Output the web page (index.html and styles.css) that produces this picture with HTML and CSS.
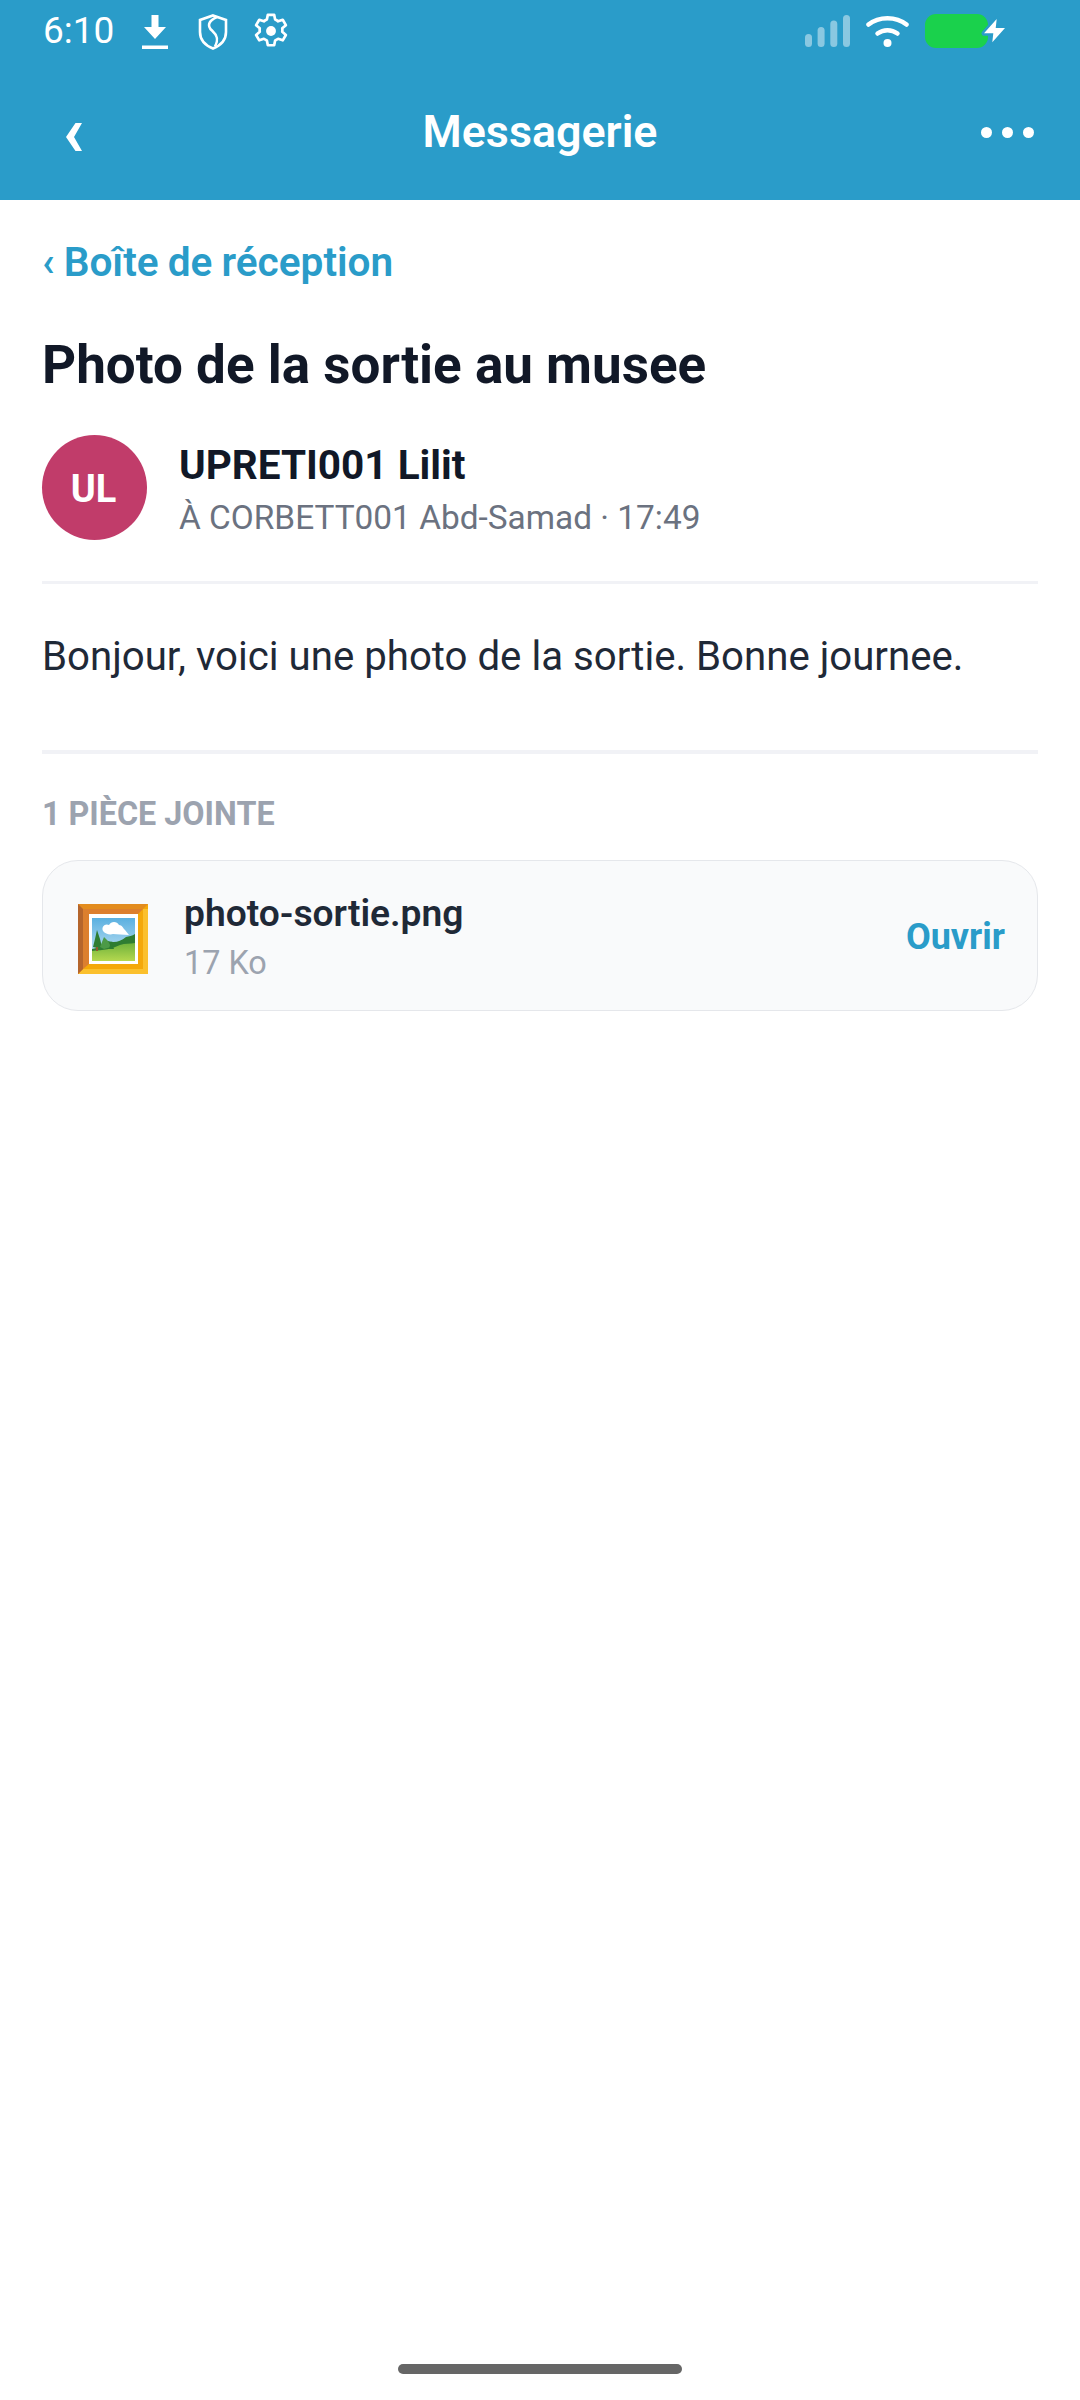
FILE: index.html
```html
<!DOCTYPE html>
<html lang="fr">
<head>
<meta charset="utf-8">
<title>Messagerie</title>
<link rel="stylesheet" href="styles.css">
</head>
<body>
<div class="screen">
  <header class="header">
    <div class="status">
      <div class="status-left">
        <span class="time">6:10</span>
        <svg class="ic-dl" viewBox="0 0 26 34"><path d="M9.500 0h7v12H24L13 24 2 12h7.500z" fill="#fff"/><rect y="30.500" width="26" height="3.500" fill="#fff"/></svg>
        <svg class="ic-shield" viewBox="0 0 30 36"><path d="M15 1.500 28 6v12c0 8-5.500 13.500-13 16.500C7.500 31.500 2 26 2 18V6z" fill="none" stroke="#fff" stroke-width="2.600"/><path d="M19 3C10 7 9 12 14 16.500s7 9 3 16" fill="none" stroke="#fff" stroke-width="2.600"/></svg>
        <svg class="ic-gear" viewBox="0 0 24 24"><circle cx="12" cy="12" r="3.100" fill="#fff"/><path d="M10 1.800h4l.6 3a7.500 7.500 0 0 1 1.900 1.100l2.900-1 2 3.400-2.300 2a7.500 7.500 0 0 1 0 2.200l2.300 2-2 3.400-2.900-1a7.500 7.500 0 0 1-1.900 1.100l-.6 3h-4l-.6-3a7.500 7.500 0 0 1-1.900-1.100l-2.900 1-2-3.400 2.300-2a7.500 7.500 0 0 1 0-2.200l-2.300-2 2-3.400 2.900 1a7.500 7.500 0 0 1 1.900-1.100z" fill="none" stroke="#fff" stroke-width="1.700" stroke-linejoin="round"/></svg>
      </div>
      <div class="status-right">
        <svg class="ic-signal" viewBox="0 0 45 32"><g fill="#fff" fill-opacity=".45"><rect y="19" width="7" height="13" rx="3.500"/><rect x="12.600" y="12" width="7" height="20" rx="3.500"/><rect x="25.300" y="5.500" width="7" height="26.500" rx="3.500"/><rect x="38" width="7" height="32" rx="3.500"/></g></svg>
        <svg class="ic-wifi" viewBox="0 0 43 32"><path d="M2.500 9.500C13 1 30 1 40.500 9.500" fill="none" stroke="#fff" stroke-width="4.500" stroke-linecap="round"/><path d="M11.500 18.500c6-4.500 14-4.500 20 0" fill="none" stroke="#fff" stroke-width="4.500" stroke-linecap="round"/><circle cx="21.500" cy="28" r="4" fill="#fff"/></svg>
        <span class="battery">
          <svg class="ic-bolt" viewBox="0 0 22 24"><path d="M13.700 0 1 14.300h9.300l-1 9 12.700-14.300h-9.300z" fill="#fff" stroke="#2a9cc9" stroke-width="5" stroke-linejoin="round" paint-order="stroke"/></svg>
        </span>
      </div>
    </div>
    <div class="nav">
      <svg class="back" viewBox="0 0 16 28"><path d="M9.500 0H16L8 14l8 14H9.500L0 14z" fill="#fff"/></svg>
      <h1 class="nav-title">Messagerie</h1>
      <div class="dots"><i></i><i></i><i></i></div>
    </div>
  </header>

  <main class="content">
    <a class="inbox">‹ Boîte de réception</a>
    <h2 class="subject">Photo de la sortie au musee</h2>
    <div class="sender">
      <div class="avatar">UL</div>
      <div class="sender-text">
        <div class="sender-name">UPRETI001 Lilit</div>
        <div class="sender-meta">À CORBETT001 Abd-Samad · 17:49</div>
      </div>
    </div>
    <p class="body-text">Bonjour, voici une photo de la sortie. Bonne journee.</p>
    <div class="att-label">1 PIÈCE JOINTE</div>
    <div class="att-card">
      <svg class="frame" viewBox="0 0 70 70">
        <defs>
          <linearGradient id="sky" x1="0" y1="0" x2="0" y2="1"><stop offset="0" stop-color="#5ab0e0"/><stop offset="1" stop-color="#cfe9f6"/></linearGradient>
          <linearGradient id="grass" x1="0" y1="0" x2="0" y2="1"><stop offset="0" stop-color="#6fb23c"/><stop offset="1" stop-color="#b5d84f"/></linearGradient>
        </defs>
        <rect width="70" height="70" fill="#f4a80a"/>
        <path d="M65 5h5v65H0l5-5h60z" fill="#fbc02d"/>
        <path d="M60 10h5v55H5l5-5h50z" fill="#f4a80a"/>
        <path d="M0 0h70l-5 5H5v60l-5 5z" fill="#e38c1e"/>
        <path d="M0 0l5 5v60l-5 5z" fill="#b5652c"/>
        <path d="M5 5h60l-5 5H11v50l-6 5z" fill="#dc7f2e"/>
        <rect x="11" y="10" width="49" height="50" fill="#fff"/>
        <rect x="14" y="14" width="43" height="43" fill="url(#sky)"/>
        <path d="M25 27c-2-4 2-8 6-6 2-4 8-4 10 0 3 0 4 3 6 5l4 5c-6 0-12-1-16-1-3 1-8 0-10-3z" fill="#fff"/>
        <path d="M30 37c6 2 12 1 18-4 3-1 6-1 9-3v27H14V45c6-1 11-4 16-8z" fill="#2f7d32"/>
        <path d="M14 47c12-1 20-2 28-6 5-2 10-1 15-2v18H14z" fill="url(#grass)"/>
        <path d="M19 26l3 9 2 8-5 1-4-1 2-8z" fill="#2e7d32"/>
        <rect x="18" y="43" width="2" height="4" fill="#8d5a2b"/>
        <path d="M26 33l4 4 3 6-7 2-4-2 2-5z" fill="#4c9a47"/>
        <path d="M33 37l3 8h-5z" fill="#2e7d32"/>
      </svg>
      <div class="att-info">
        <div class="att-name">photo-sortie.png</div>
        <div class="att-size">17 Ko</div>
      </div>
      <span class="att-open">Ouvrir</span>
    </div>
  </main>
  <div class="home-wrap"><div class="home-bar"></div></div>
</div>
</body>
</html>
```
FILE: styles.css
```css
* { box-sizing: border-box; }
html, body { margin: 0; padding: 0; background: #fff; }
body { font-family: Roboto, "Noto Sans", sans-serif; color: #111827; }
.screen { width: 1080px; height: 2400px; display: flex; flex-direction: column; }

.header { height: 200px; background: #2a9cc9; color: #fff; display: flex; flex-direction: column; flex: none; }
.status { height: 62px; padding: 14px 92px 0 43px; display: flex; justify-content: space-between; align-items: flex-start; }
.status-left, .status-right { display: flex; align-items: flex-start; }
.time { font-size: 37px; line-height: 34px; width: 99px; }
.ic-dl { width: 26px; height: 34px; margin-top: 1px; margin-right: 30px; }
.ic-shield { width: 30px; height: 36px; margin-right: 24px; }
.ic-gear { width: 38px; height: 38px; margin-top: -2px; }
.ic-signal { width: 45px; height: 32px; margin-top: 1px; margin-right: 16px; }
.ic-wifi { width: 43px; height: 32px; margin-top: 1px; margin-right: 16px; }
.battery { position: relative; display: block; width: 63px; height: 34px; border-radius: 11px; background: #1ad14c; }
.ic-bolt { position: absolute; left: 58px; top: 5px; width: 22px; height: 24px; overflow: visible; }

.nav { flex: 1; display: grid; grid-template-columns: 1fr auto 1fr; align-items: center; padding: 0 46px; }
.back { width: 16px; height: 28px; margin: 12px 0 0 20px; }
.nav-title { margin: 0; font-size: 44.800px; font-weight: 600; line-height: 50px; margin-top: 2px; }
.dots { display: flex; justify-self: end; gap: 10px; margin-top: 2px; }
.dots i { width: 11px; height: 11px; border-radius: 50%; background: #fff; }

.content { flex: 1; padding: 0 42px; display: flex; flex-direction: column; align-items: stretch; }
.inbox { margin-top: 39px; font-size: 40.600px; line-height: 46px; font-weight: 600; color: #2a9cc9; word-spacing: -1px; }
.subject { margin: 50px 0 0; font-size: 53px; line-height: 60px; font-weight: 700; color: #111827; }
.sender { margin-top: 40px; padding-bottom: 41px; display: flex; align-items: center; gap: 32px; border-bottom: 3px solid #f1f2f6; }
.avatar { width: 105px; height: 105px; border-radius: 50%; background: #c13c6a; color: #fff; font-size: 38px; font-weight: 700; padding: 2px 2px 0 0; display: flex; align-items: center; justify-content: center; flex: none; }
.sender-text { padding-top: 5px; }
.sender-name { font-size: 40.500px; line-height: 46px; font-weight: 700; color: #111827; }
.sender-meta { margin-top: 10px; font-size: 33.400px; line-height: 40px; color: #6b7280; }
.body-text { margin: 0; padding: 44px 0 64px; font-size: 40.200px; line-height: 58px; color: #1f2937; border-bottom: 4px solid #f1f2f6; }
.att-label { margin-top: 42px; font-size: 32.300px; line-height: 36px; font-weight: 700; color: #9ca3af; }
.att-card { margin-top: 28px; height: 151px; padding: 0 32px 0 35px; background: #f9fafb; border: 1.500px solid #e5e7eb; border-radius: 36px; display: flex; align-items: center; }
.frame { width: 70px; height: 70px; flex: none; margin-top: 6px; }
.att-info { flex: 1; margin-left: 36px; }
.att-name { font-size: 37.200px; line-height: 44px; font-weight: 600; color: #1f2937; }
.att-size { margin-top: 10px; font-size: 32.400px; line-height: 36px; color: #9ca3af; }
.att-open { font-size: 36px; font-weight: 700; color: #2a9cc9; margin-top: 3px; }

.home-wrap { flex: none; height: 36px; display: flex; justify-content: center; }
.home-bar { width: 284px; height: 10px; border-radius: 5px; background: #666; }
```
